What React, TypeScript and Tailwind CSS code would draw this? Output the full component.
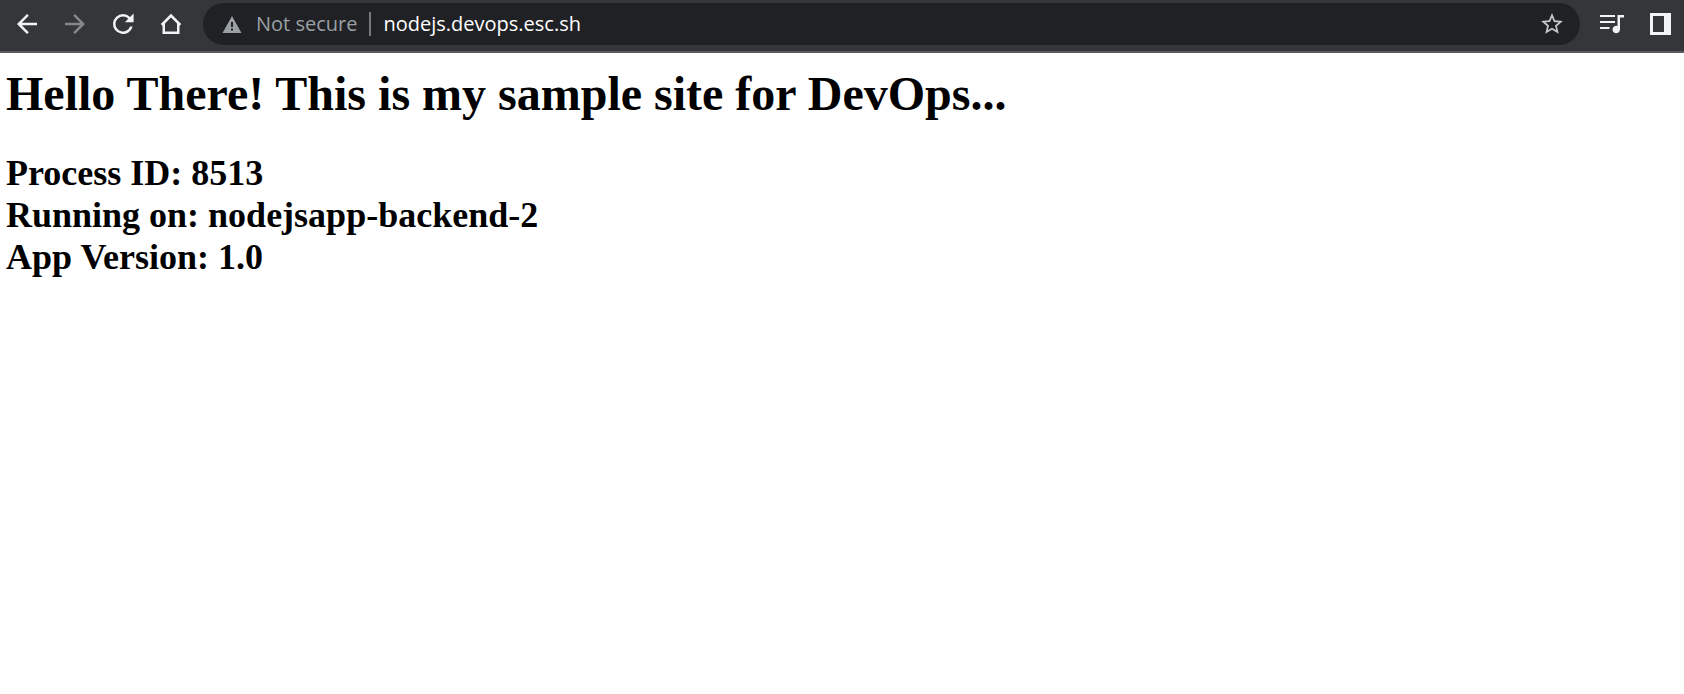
import type { ReactNode } from "react";

function ToolbarButton({ label, disabled, children }: { label: string; disabled?: boolean; children: ReactNode }) {
  return (
    <button
      type="button"
      aria-label={label}
      disabled={disabled}
      className="flex h-[42px] w-12 shrink-0 items-center justify-center text-[#f1f3f4] disabled:text-[#86888a]"
    >
      {children}
    </button>
  );
}

function Toolbar() {
  return (
    <header className="flex h-[53px] gap-2 border-b-2 border-[#5b5c5f] bg-[#35363a] pt-[3px] pl-[3px]">
      <nav aria-label="Browser" className="flex shrink-0">
        <ToolbarButton label="Back">
          <svg className="size-[30px]" viewBox="0 0 24 24" fill="currentColor" aria-hidden="true">
            <path d="M20 11H7.83l5.59-5.59L12 4l-8 8 8 8 1.41-1.41L7.83 13H20v-2z" />
          </svg>
        </ToolbarButton>
        <ToolbarButton label="Forward" disabled>
          <svg className="size-[30px]" viewBox="0 0 24 24" fill="currentColor" aria-hidden="true">
            <path d="M12 4l-1.41 1.41L16.17 11H4v2h12.17l-5.58 5.59L12 20l8-8z" />
          </svg>
        </ToolbarButton>
        <ToolbarButton label="Reload">
          <svg className="size-[30px]" viewBox="0 0 24 24" fill="currentColor" aria-hidden="true">
            <path d="M17.65 6.35A7.96 7.96 0 0 0 12 4a8 8 0 1 0 7.73 10h-2.08A6 6 0 1 1 12 6c1.66 0 3.14.69 4.22 1.78L13.5 10.5H20.5V3.5z" />
          </svg>
        </ToolbarButton>
        <ToolbarButton label="Home">
          <svg className="size-[30px]" viewBox="0 0 24 24" fill="none" stroke="currentColor" strokeWidth="2" aria-hidden="true">
            <path d="M4.5 12.8L12 5.3l7.5 7.5M6.2 11.5V19h11.600v-7.5" />
          </svg>
        </ToolbarButton>
      </nav>

      <div className="flex h-[42px] min-w-0 flex-1 items-center rounded-full bg-[#202124] pr-4 pl-[19px] font-['Open_Sans','Noto_Sans',sans-serif] text-xl leading-7">
        <svg className="mr-[14px] h-[17px] w-5 shrink-0 text-[#9aa0a6]" viewBox="0 0 20 17" fill="currentColor" aria-hidden="true">
          <path fillRule="evenodd" d="M10 0l9.5 17H.5zM9 6v5h2V6zM9 12.5v2h2v-2z" />
        </svg>
        <span className="shrink-0 text-[#9aa0a6]">Not secure</span>
        <span className="mx-3 h-6 w-0.5 shrink-0 bg-[#77797d]" />
        <input
          type="text"
          aria-label="Address"
          defaultValue="nodejs.devops.esc.sh"
          className="min-w-0 flex-1 bg-transparent text-white outline-none"
        />
        <button type="button" aria-label="Bookmark this page" className="shrink-0 text-[#c4c6c9]">
          <svg className="size-6" viewBox="1 1 22 22" fill="currentColor" aria-hidden="true">
            <path d="M22 9.24l-7.19-.62L12 2 9.19 8.63 2 9.24l5.46 4.73L5.82 21 12 17.27 18.18 21l-1.63-7.03L22 9.24zM12 15.4l-3.76 2.27 1-4.28-3.32-2.88 4.38-.38L12 6.1l1.71 4.04 4.38.38-3.32 2.88 1 4.28L12 15.4z" />
          </svg>
        </button>
      </div>

      <div className="flex shrink-0">
        <ToolbarButton label="Media controls">
          <svg className="h-5 w-6" viewBox="0 0 24 20" fill="currentColor" aria-hidden="true">
            <path d="M0 1h15v2H0zM0 7h15v2H0zM0 13h9.5v2H0z" />
            <path d="M17.5 1H24v2.5h-4V15.500a3.750 3.750 0 1 1-2.500-3.530z" />
          </svg>
        </ToolbarButton>
        <ToolbarButton label="Side panel">
          <svg className="h-[22px] w-[21px]" viewBox="0 0 21 22" fill="currentColor" aria-hidden="true">
            <path fillRule="evenodd" d="M0 0h21v22H0zM3 3v16h11V3z" />
          </svg>
        </ToolbarButton>
      </div>
    </header>
  );
}

export default function App() {
  return (
    <div className="min-h-screen bg-white">
      <Toolbar />
      <main className="px-1.5 pt-[13px] font-['Liberation_Serif',serif] font-bold text-black">
        <h1 className="text-5xl leading-14">Hello There! This is my sample site for DevOps...</h1>
        <h2 className="mt-[30px] text-4xl leading-[42px]">
          Process ID: 8513
          <br />
          Running on: nodejsapp-backend-2
          <br />
          App Version: 1.0
        </h2>
      </main>
    </div>
  );
}
